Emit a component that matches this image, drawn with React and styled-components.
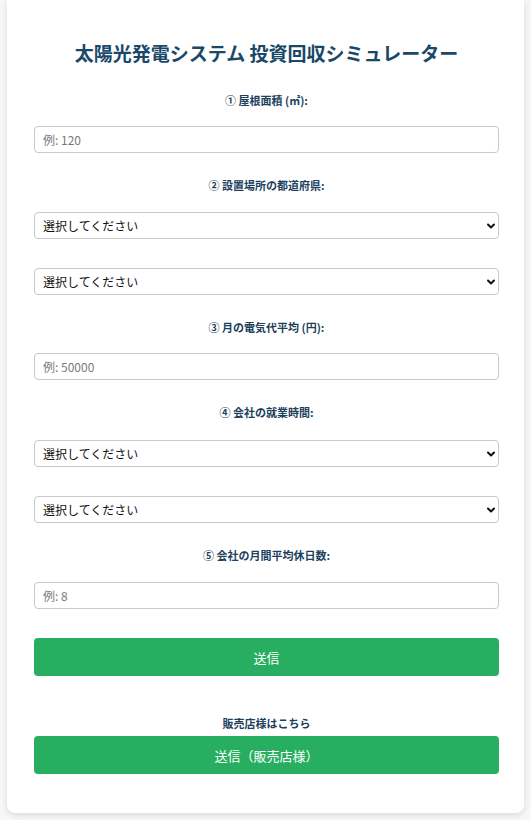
import React from 'react'
import styled, { createGlobalStyle } from 'styled-components';
import { ChevronDown } from 'lucide-react';

const GlobalStyle = createGlobalStyle`
  html, body {
    margin: 0;
    padding: 0;
    background: #f7f7f7;
    font-family: "Noto Sans CJK JP", "Noto Sans", sans-serif;
  }
  * { box-sizing: border-box; }
`;

const Page = styled.div`
  padding: 0 7px 7px;
`;

const Card = styled.div`
  background: #ffffff;
  border-radius: 0 0 8px 8px;
  box-shadow: 0 2px 6px rgba(0, 0, 0, 0.12);
  padding: 41px 25px 39px 27px;
  display: flex;
  flex-direction: column;
`;

const Title = styled.h1`
  margin: 0 0 28px;
  text-align: center;
  font-size: 19px;
  line-height: 24px;
  font-weight: 700;
  color: #1a4868;
`;

const Label = styled.label`
  display: block;
  text-align: center;
  font-size: 11px;
  line-height: 14px;
  font-weight: 700;
  color: #1c3f5c;
  margin: 0 0 ${p => p.$gap ?? 19}px;
`;

const Field = styled.div`
  margin-bottom: ${p => p.$gap ?? 25}px;
`;

const TextInput = styled.input`
  display: block;
  width: 100%;
  height: 27px;
  border: 1px solid #c8c8c8;
  border-radius: 4px;
  padding: 0 8px;
  font-family: inherit;
  font-size: 12px;
  color: #222;
  background: #fff;
  outline: none;

  &::placeholder {
    color: #7a7a7a;
  }
`;

const SelectWrap = styled.div`
  position: relative;
  margin-bottom: ${p => p.$gap ?? 25}px;
`;

const Select = styled.select`
  display: block;
  width: 100%;
  height: 27px;
  border: 1px solid #c8c8c8;
  border-radius: 4px;
  padding: 0 28px 0 8px;
  font-family: inherit;
  font-size: 12px;
  color: #111;
  background: #fff;
  appearance: none;
  -webkit-appearance: none;
  outline: none;
`;

const Arrow = styled(ChevronDown)`
  position: absolute;
  right: 2px;
  top: 8px;
  pointer-events: none;
  color: #111;
`;

const Button = styled.button`
  display: block;
  width: 100%;
  height: 38px;
  border: none;
  border-radius: 4px;
  background: #27ae60;
  color: #ffffff;
  font-family: inherit;
  font-size: 13px;
  cursor: pointer;
`;

const Dealer = styled.div`
  margin-top: 40px;
  display: flex;
  flex-direction: column;
  gap: 6px;
`;

const DealerText = styled.div`
  text-align: center;
  font-size: 11px;
  line-height: 14px;
  font-weight: 700;
  color: #1c3f5c;
`;

function Dropdown({ gap }) {
  return (
    <SelectWrap $gap={gap}>
      <Select defaultValue="">
        <option value="">選択してください</option>
      </Select>
      <Arrow size={12} strokeWidth={4} />
    </SelectWrap>
  );
}

function App() {
  return (
    <Page>
      <GlobalStyle />
      <Card>
        <Title>太陽光発電システム 投資回収シミュレーター</Title>

        <Label>① 屋根面積 (㎡):</Label>
        <Field>
          <TextInput placeholder="例: 120" />
        </Field>

        <Label $gap={20}>② 設置場所の都道府県:</Label>
        <Dropdown gap={29} />
        <Dropdown />

        <Label>③ 月の電気代平均 (円):</Label>
        <Field>
          <TextInput placeholder="例: 50000" />
        </Field>

        <Label $gap={21}>④ 会社の就業時間:</Label>
        <Dropdown gap={29} />
        <Dropdown />

        <Label $gap={20}>⑤ 会社の月間平均休日数:</Label>
        <Field $gap={29}>
          <TextInput placeholder="例: 8" />
        </Field>

        <Button>送信</Button>

        <Dealer>
          <DealerText>販売店様はこちら</DealerText>
          <Button>送信（販売店様）</Button>
        </Dealer>
      </Card>
    </Page>
  );
}

export default App;
